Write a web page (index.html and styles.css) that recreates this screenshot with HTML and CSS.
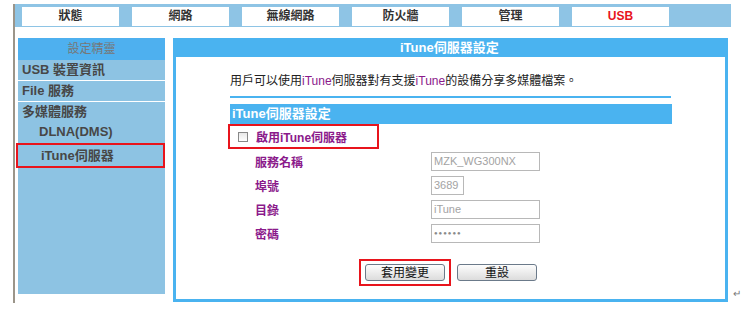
FILE: index.html
```html
<!DOCTYPE html>
<html lang="zh-Hant">
<head>
  <meta charset="UTF-8">
  <title>iTune伺服器設定</title>
  <link rel="stylesheet" href="styles.css">
</head>
<body>
  <div class="wrap">
    <div class="frame">
      <ul class="nav">
        <li>狀態</li>
        <li>網路</li>
        <li>無線網路</li>
        <li>防火牆</li>
        <li>管理</li>
        <li class="active">USB</li>
      </ul>
      <div class="main">
        <div class="side">
          <div class="side-head">設定精靈</div>
          <div class="side-item line">USB 裝置資訊</div>
          <div class="side-item line">File 服務</div>
          <div class="side-item">多媒體服務</div>
          <div class="side-item sub">DLNA(DMS)</div>
          <div class="side-item sub current">iTune伺服器</div>
        </div>
        <div class="panel">
          <div class="panel-head">iTune伺服器設定</div>
          <div class="panel-body">
            <p class="desc">用戶可以使用<span class="hl">iTune</span>伺服器對有支援<span class="hl">iTune</span>的設備分享多媒體檔案。</p>
            <div class="rule"></div>
            <div class="section">iTune伺服器設定</div>
            <label class="enable"><span class="box"></span>啟用iTune伺服器</label>
            <div class="row"><span class="lbl">服務名稱</span><input class="field" value="MZK_WG300NX" disabled></div>
            <div class="row"><span class="lbl">埠號</span><input class="field short" value="3689" disabled></div>
            <div class="row"><span class="lbl">目錄</span><input class="field" value="iTune" disabled></div>
            <div class="row"><span class="lbl">密碼</span><input class="field pw" value="●●●●●●" disabled></div>
            <div class="actions">
              <span class="mark"><button>套用變更</button></span>
              <button>重設</button>
            </div>
          </div>
        </div>
      </div>
    </div>
    <span class="ret">↵</span>
  </div>
</body>
</html>
```
FILE: styles.css
```css
* {
  margin: 0;
  padding: 0;
  box-sizing: border-box;
}
body {
  background: #fff;
  font-family: "Liberation Sans", "Noto Sans CJK TC", sans-serif;
  font-size: 12px;
  color: #222;
}
.wrap {
  display: flex;
  align-items: flex-end;
  padding: 4px 0 0 13px;
}
.frame {
  width: 718px;
  height: 299px;
  border-left: 2px solid #9b958a;
}
.nav {
  list-style-type: none;
  display: flex;
  gap: 13px;
  height: 23px;
  padding: 3px 0 0 7px;
  background: #8ec4e5;
}
.nav li {
  width: 97px;
  height: 19px;
  background: #fff;
  text-align: center;
  font-weight: bold;
  line-height: 19px;
  color: #333;
}
.nav li.active {
  color: #e8141c;
}
.main {
  display: flex;
  gap: 8px;
  padding: 11px 0 0 3px;
}
.side {
  width: 147px;
  height: 256px;
  background: #8dc3e3;
  font-weight: bold;
  font-size: 13px;
  color: #474747;
}
.side-head {
  height: 22px;
  line-height: 22px;
  background: #4eb0ef;
  text-align: center;
  font-weight: normal;
  font-size: 12px;
  color: #777;
}
.side-item {
  height: 20px;
  line-height: 20px;
  padding-left: 4px;
}
.side-item.line {
  border-bottom: 1px solid #fff;
  height: 21px;
}
.side-item.sub {
  padding-left: 21px;
}
.side-item.current {
  height: 25px;
  line-height: 21px;
  margin: 1px 0 0 -2px;
  padding-left: 23px;
  border: 2px solid #e8141c;
}
.panel {
  width: 555px;
  height: 264px;
  border: 3px solid #4ab3f0;
  border-top: none;
  display: flex;
  flex-direction: column;
}
.panel-head {
  height: 19px;
  margin: 0 -3px;
  background: #4ab3f0;
  color: #fff;
  font-weight: bold;
  font-size: 13px;
  line-height: 19px;
  padding-left: 227px;
}
.panel-body {
  padding: 16px 0 0 54px;
}
.desc {
  height: 16px;
  line-height: 16px;
}
.hl {
  color: #8b1a8b;
}
.rule {
  width: 441px;
  height: 2px;
  margin-top: 7px;
  background: #4ab3f0;
}
.section {
  width: 442px;
  height: 20px;
  margin-top: 6px;
  background: #4ab3f0;
  color: #fff;
  font-weight: bold;
  font-size: 13px;
  line-height: 20px;
  padding-left: 2px;
}
.enable {
  display: flex;
  align-items: center;
  gap: 8px;
  width: 151px;
  height: 25px;
  margin-left: -2px;
  padding-left: 8px;
  border: 2px solid #e8141c;
  color: #8b1a8b;
  font-weight: bold;
}
.box {
  width: 10px;
  height: 10px;
  border: 1px solid #888;
  background: linear-gradient(#e8e8e8, #fff);
}
.row {
  display: flex;
  align-items: center;
  height: 24px;
  padding-left: 25px;
}
.lbl {
  width: 176px;
  color: #8b1a8b;
  font-weight: bold;
}
.field {
  width: 109px;
  height: 19px;
  border: 1px solid #b8b8b8;
  background: #fff;
  color: #a3a3a3;
  font-family: inherit;
  font-size: 11px;
  padding-left: 2px;
}
.field.short {
  width: 33px;
}
.field.pw {
  font-size: 6px;
  letter-spacing: 1px;
  color: #8a8a8a;
}
.actions {
  display: flex;
  align-items: center;
  gap: 6px;
  margin: 14px 0 0 129px;
}
.mark {
  border: 2px solid #e8141c;
  padding: 3px 4px;
  display: flex;
}
.actions button {
  width: 80px;
  height: 17px;
  border: 1px solid #6b7a8a;
  border-radius: 3px;
  background: linear-gradient(#fdfdfd, #dcdcdc);
  font-family: inherit;
  font-size: 12px;
  color: #111;
  line-height: 14px;
}
.ret {
  color: #777;
  font-size: 10px;
  margin: 0 0 4px 2px;
}
```
